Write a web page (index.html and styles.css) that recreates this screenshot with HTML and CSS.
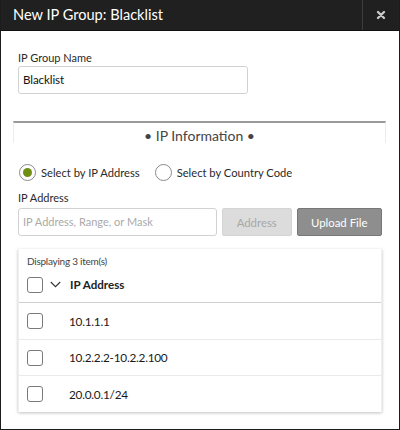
FILE: index.html
```html
<!DOCTYPE html>
<html>
<head>
<meta charset="utf-8">
<link rel="stylesheet" href="styles.css">
</head>
<body>
<div class="dialog">
  <div class="header">
    <div class="title">New IP Group: Blacklist</div>
    <div class="close">
      <svg width="10" height="10" viewBox="0 0 10 10"><path d="M2 2L8 8M8 2L2 8" stroke="#c8c8c8" stroke-width="2.4" stroke-linecap="round"/></svg>
    </div>
  </div>
  <div class="body">
    <div class="field">
      <div class="label">IP Group Name</div>
      <div class="input name-input">Blacklist</div>
    </div>
    <div class="section">
      <div class="section-title">• IP Information •</div>
    </div>
    <div class="radios">
      <label class="radio"><span class="dot on"></span>Select by IP Address</label>
      <label class="radio"><span class="dot"></span>Select by Country Code</label>
    </div>
    <div class="field ip-field">
      <div class="label">IP Address</div>
      <div class="ip-row">
        <div class="input ip-input placeholder">IP Address, Range, or Mask</div>
        <div class="btn btn-disabled">Address</div>
        <div class="btn btn-upload">Upload File</div>
      </div>
    </div>
    <div class="card">
      <div class="count">Displaying 3 item(s)</div>
      <div class="row head">
        <span class="cb"></span>
        <svg class="chev" width="11" height="7" viewBox="0 0 11 7"><path d="M0.8 1L5.5 5.7L10.2 1" fill="none" stroke="#333" stroke-width="1.1"/></svg>
        <span class="hcell">IP Address</span>
      </div>
      <div class="row first"><span class="cb"></span><span class="cell">10.1.1.1</span></div>
      <div class="row"><span class="cb"></span><span class="cell">10.2.2.2-10.2.2.100</span></div>
      <div class="row last"><span class="cb"></span><span class="cell">20.0.0.1/24</span></div>
    </div>
  </div>
</div>
</body>
</html>
```
FILE: styles.css
```css
* { box-sizing: border-box; }
html, body { margin: 0; padding: 0; background: #fff; }
body { font-family: Lato, "Open Sans", sans-serif; color: #333; }
.dialog {
  width: 400px; height: 430px;
  border: 1px solid #1c1c1c;
  border-top: none;
  background: #fff;
  display: flex; flex-direction: column;
}
.header {
  height: 31px; background: #202020;
  display: flex; align-items: stretch;
  border-bottom: 1px solid #111;
}
.title {
  flex: 1; color: #fff; font-size: 14.6px;
  padding-left: 12px; line-height: 30px;
}
.close {
  width: 37px; border-left: 1px solid #3c3c3c;
  display: flex; align-items: center; justify-content: center;
}
.body { padding: 20px 0 0 0; display: flex; flex-direction: column; }
.field { padding: 0 17px; }
.label { font-size: 11px; color: #2a2a2a; line-height: 14px; margin-bottom: 1px; }
.input {
  height: 28px; border: 1px solid #d2d2d2; border-radius: 3px;
  font-size: 11px; line-height: 26px; padding: 0 4px; color: #111;
}
.name-input { width: 230px; font-size: 11.6px; letter-spacing: -0.1px; }
.section {
  margin: 27px 13px 0 12px;
  border-top: 2px solid #9a9a9a;
  border-left: 1px solid #ececec;
  border-right: 1px solid #ececec;
  height: 22px;
}
.section-title {
  text-align: center; font-size: 14px; color: #444;
  line-height: 22px; margin-top: 2px;
}
.radios {
  display: flex; gap: 0; padding: 0 18px; margin-top: 20px;
  font-size: 11.2px; color: #2a2a2a;
}
.radio { display: flex; align-items: center; gap: 5px; height: 18px; }
.radio + .radio { margin-left: 15px; }
.dot {
  width: 17px; height: 17px; border-radius: 50%;
  border: 1px solid #8a8a8a; display: inline-flex;
  align-items: center; justify-content: center; background: #fff;
}
.dot.on::after {
  content: ""; width: 9px; height: 9px; border-radius: 50%; background: #6f8f14;
}
.ip-field { margin-top: 10px; }
.ip-row { display: flex; gap: 5px; margin-top: 3px; }
.ip-input { width: 200px; }
.placeholder { color: #aaa; }
.btn {
  height: 28px; border-radius: 2px; font-size: 11.4px;
  display: flex; align-items: center; justify-content: center;
}
.btn-disabled { width: 70px; background: #dcdcdc; color: #a8a8a8; border: 1px solid #d4d4d4; }
.btn-upload { width: 86px; background: #8e8e8e; color: #fff; border: 1px solid #777; }
.card {
  margin: 13px 17px 0 17px;
  box-shadow: 0 1px 3px rgba(0,0,0,0.25);
  border-left: 1px solid #eee; border-right: 1px solid #eee;
}
.count { font-size: 10px; letter-spacing: -0.25px; color: #444; padding: 6px 0 0 8px; line-height: 12px; height: 18px; }
.row {
  height: 36px; display: flex; align-items: center;
  border-bottom: 1px solid #eaeaea; padding-left: 8px;
}
.row.head { height: 36px; border-bottom: 1px solid #cfcfcf; }
.row.first { height: 37px; }
.row.last { border-bottom: none; }
.cb {
  width: 16px; height: 16px; border: 1px solid #7a7a7a; border-radius: 3px;
  flex: none;
}
.chev { margin-left: 7px; }
.hcell { margin-left: 9px; font-weight: bold; font-size: 11.6px; color: #222; }
.cell { margin-left: 26px; font-size: 11.8px; letter-spacing: -0.25px; color: #1a1a1a; }
```
